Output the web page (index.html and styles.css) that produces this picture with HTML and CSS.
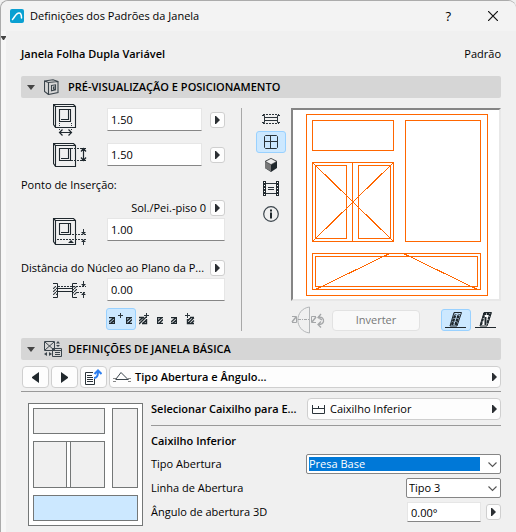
FILE: index.html
```html
<!DOCTYPE html>
<html lang="pt">
<head>
<meta charset="utf-8">
<meta name="viewport" content="width=device-width, initial-scale=1">
<title>Definições dos Padrões da Janela</title>
<link rel="stylesheet" href="styles.css">
</head>
<body>
<svg class="defs" aria-hidden="true">
  <defs>
    <pattern id="hatch" width="3" height="3" patternUnits="userSpaceOnUse"><path d="M0 3L3 0" stroke="#2b343a" stroke-width="1.1"/></pattern>
    <symbol id="play" viewBox="0 0 5 8"><path d="M0 0h1l4 4-4 4H0z" fill="#2b2f33"/></symbol>
    <symbol id="chevron" viewBox="0 0 9 6"><path d="M.5.5l4 4 4-4" fill="none" stroke="#555" stroke-width="1.1"/></symbol>
    <symbol id="frame" viewBox="0 0 24 25"><path d="M20.500.5H.5v20l2 3h20v-21zM.5.5l2 2v21M2.500 2.500h20M6.500 5.500h11v12h-11zM8 15.500h7.500V6" fill="none" stroke="#1f282e" stroke-width="1.1"/></symbol>
    <symbol id="wall-a" viewBox="0 0 6 7"><path d="M0 .5h5.500v6H0M0 5l4.500-4M1.500 6.500L6 2.500" fill="none" stroke="#1f282e" stroke-width="1.4"/></symbol>
    <symbol id="wall-b" viewBox="0 0 6 7"><path d="M6 .5H.5v6H6M.5 4.500L4.500 1M2 6.500l4-4" fill="none" stroke="#1f282e" stroke-width="1.4"/></symbol>
  </defs>
</svg>
<main class="dialog">
  <header class="titlebar">
    <svg class="logo" width="14" height="14" viewBox="0 0 14 14"><rect width="14" height="14" rx="2" fill="#0aa0d2"/><path d="M2.500 10.500C4.500 8.500 6 4 9 4c2 0 2.500 2 2.500 5" fill="none" stroke="#fff" stroke-width="1.500" stroke-linecap="round"/></svg>
    <h1 class="title">Definições dos Padrões da Janela</h1>
    <button class="plain help" type="button" aria-label="Ajuda">?</button>
    <button class="plain close" type="button" aria-label="Fechar"><svg width="10" height="10" viewBox="0 0 10 10"><path d="M0 0l10 10M10 0L0 10" stroke="#111" stroke-width="1.200"/></svg></button>
  </header>
  <div class="body">
    <svg class="edge-arrow" width="5" height="4" viewBox="0 0 5 4"><path d="M0 0h5v1L3 4H2L0 1z" fill="#444"/></svg>
    <div class="content">
      <div class="heading"><strong>Janela Folha Dupla Variável</strong><span>Padrão</span></div>

      <h2 class="section-bar">
        <svg class="fold" width="8" height="5" viewBox="0 0 8 5"><path d="M0 0h8L4 5z" fill="#444"/></svg>
        <svg width="18" height="16" viewBox="0 0 18 16"><path d="M4.500 3.500L14 2.500v11l-9.500 2zM4.500 3.500L.5 2v10.500l4 3M.5 2L9 .7l5 1.800M7.500 6.500l4-.7v5l-4 1zM9.500 8h2v2h-2z" fill="none" stroke="#3b454c" stroke-width="1.100"/></svg>
        <span>PRÉ-VISUALIZAÇÃO E POSICIONAMENTO</span>
      </h2>

      <section class="placement">
        <div class="params">
          <div class="field-row gap-large">
            <svg class="field-icon" width="36" height="31" viewBox="0 0 36 31"><use href="#frame" width="24" height="25"/><path d="M6.500 19v8M18.500 19v8" stroke="#2b343a" stroke-dasharray="1 1"/><path d="M6 28.500h13M9.500 25.500l-3 3 3 3M15.500 25.500l3 3-3 3" fill="none" stroke="#1f282e" stroke-width="1.2"/></svg>
            <input class="box" aria-label="Largura" value="1.50"><button class="step" type="button" aria-label="Opções de largura"><svg width="5" height="8"><use href="#play"/></svg></button>
          </div>
          <div class="field-row">
            <svg class="field-icon" width="36" height="31" viewBox="0 0 36 31"><use href="#frame" y="4" width="24" height="25"/><path d="M18 9.500h10M18 21.500h10" stroke="#2b343a" stroke-dasharray="2 1"/><path d="M30.500 9v13M28 12.500l2.500-3 2.500 3M28 18.500l2.500 3 2.500-3M28 9.500h5M28 21.500h5" fill="none" stroke="#1f282e" stroke-width="1.2"/></svg>
            <input class="box" aria-label="Altura" value="1.50"><button class="step" type="button" aria-label="Opções de altura"><svg width="5" height="8"><use href="#play"/></svg></button>
          </div>
          <div class="label-row">Ponto de Inserção:</div>
          <div class="label-row end"><span>Sol./Pei.-piso 0</span><button class="step" type="button" aria-label="Referência"><svg width="5" height="8"><use href="#play"/></svg></button></div>
          <div class="field-row">
            <svg class="field-icon" width="36" height="31" viewBox="0 0 36 31"><path d="M20.500 4.500H.5v23l2 3h20v-24zM.5 4.500l2 2v24M2.500 6.500h20M6.500 9.500h11v11h-11zM8 18.500h7.500V10" fill="none" stroke="#1f282e" stroke-width="1.1"/><path d="M4 25.500h29M19 20.500h14" stroke="#2b343a" stroke-dasharray="2 1"/><path d="M15 29l3-3 3 3zM28 18l2.500 2.500L33 18zM28 28l2.500-2.500L33 28z" fill="#1f282e"/><path d="M30.500 15v4M30.500 27v4" stroke="#2b343a"/></svg>
            <input class="box" aria-label="Altura do ponto de inserção" value="1.00">
          </div>
          <div class="label-row distance"><label for="distance">Distância do Núcleo ao Plano da P...</label><button class="step" type="button" aria-label="Opções de distância"><svg width="5" height="8"><use href="#play"/></svg></button></div>
          <div class="field-row">
            <svg class="field-icon" width="36" height="31" viewBox="0 0 36 31"><path d="M0 12h5v9H0zM19 12h5v9h-5z" fill="url(#hatch)"/><path d="M0 9.500h4.500v14H0M24 9.500h-4.500v14H24M5 14.500h14M5 17.500h14" fill="none" stroke="#1f282e"/><path d="M5 12.500h28M24 18.500h9" stroke="#2b343a" stroke-dasharray="2 1"/><path d="M28 10l2.500 2.500L33 10zM28 21l2.500-2.500L33 21z" fill="#1f282e"/><path d="M30.500 7v4M30.500 20v4" stroke="#2b343a"/></svg>
            <input class="box" id="distance" value="0.00">
          </div>
          <div class="anchors">
            <button class="tool active" type="button" aria-label="Âncora central"><svg width="24" height="14" viewBox="0 0 24 14"><use href="#wall-a" y="5" width="6" height="7"/><use href="#wall-b" x="17" y="5" width="6" height="7"/><path d="M9 3.500h5M11.500 1v5" stroke="#2b343a"/></svg></button>
            <button class="plain" type="button" aria-label="Âncora 1"><svg width="10" height="14" viewBox="0 0 10 14"><path d="M0 5.500h5M7.500 7v4.500H3M0 9l4-3.500M0 12l7-7M3.500 11.500L7.500 8" fill="none" stroke="#1f282e" stroke-width="1.400"/><path d="M5 3.500h5M7.500 1v5" stroke="#2b343a"/></svg></button>
            <button class="plain" type="button" aria-label="Âncora 2"><svg width="6" height="14" viewBox="0 0 6 14"><use href="#wall-b" y="5" width="6" height="7"/></svg></button>
            <button class="plain" type="button" aria-label="Âncora 3"><svg width="6" height="14" viewBox="0 0 6 14"><use href="#wall-a" y="5" width="6" height="7"/></svg></button>
            <button class="plain" type="button" aria-label="Âncora 4"><svg width="10" height="14" viewBox="0 0 10 14"><path d="M5 5.500h4M2.500 7v4.500H9M2.500 9L6 5.500M3 11.500l6-6M6 11.500L9 8.500" fill="none" stroke="#1f282e" stroke-width="1.400"/><path d="M0 3.500h5M2.500 1v5" stroke="#2b343a"/></svg></button>
          </div>
        </div>

        <div class="view-tools">
          <button class="tool" type="button" aria-label="Planta"><svg width="18" height="10" viewBox="0 0 18 10"><path d="M0 1.500h2.500v7H0M18 1.500h-2.500v7H18M3 3.500h12M3 6.500h12" fill="none" stroke="#2b343a"/><path d="M1 .5h16M1 9.500h16" stroke="#2b343a" stroke-dasharray="2 1"/></svg></button>
          <button class="tool active" type="button" aria-label="Alçado"><svg width="14" height="14" viewBox="0 0 14 14"><path d="M1.500.5h11l1 1v11l-1 1h-11l-1-1v-11zM6.500 1v12M1 6.500h12" fill="none" stroke="#2b343a"/></svg></button>
          <button class="tool" type="button" aria-label="3D"><svg width="14" height="14" viewBox="0 0 14 14"><path d="M7 0l6 3v7l-6 4-6-4V3z" fill="#20282d"/><path d="M1 3.500L7 7v6.500L1 10z" fill="#777"/><path d="M7 .5l5.500 3L7 6.500l-5.500-3z" fill="#eee" stroke="#555" stroke-width=".5"/></svg></button>
          <button class="tool" type="button" aria-label="Filme"><svg width="16" height="15" viewBox="0 0 16 15"><path d="M1.500 0v15M14.500 0v15" stroke="#20282d" stroke-width="3"/><path d="M1.500 1v14M14.500 1v14" stroke="#fff" stroke-dasharray="1 2"/><path d="M3 2.500h10M3 12.500h10M5 6.500h6M5 8.500h6" stroke="#2b343a"/></svg></button>
          <button class="tool info" type="button" aria-label="Informação"><svg width="16" height="16" viewBox="0 0 16 16"><circle cx="8" cy="8" r="7.300" fill="none" stroke="#3b454c" stroke-width="1.200"/><path d="M7 6.500h2v6H7zM7 3.500h2v2H7z" fill="#20282d"/></svg></button>
        </div>

        <div class="preview-area">
          <div class="preview">
            <svg viewBox="293 110 206 189" role="img" aria-label="Alçado da janela" fill="none" stroke="#ff6600" shape-rendering="crispEdges"><path d="M306.500 114.500h181v181h-181zM312.500 120.500h81v30h-81zM405.500 120.500h75v121h-75zM312.500 162.500h81v79h-81zM315.500 165.500h31v73h-31zM358.500 165.500h32v73h-32zM352.500 162.500v79M312.500 162.500l81 79M393.500 162.500l-81 79M312.500 253.500h168v36h-168zM315.500 256.500h162v30h-162zM315.500 289.500l74-36M403.500 253.500l74 36"/></svg>
          </div>
          <div class="preview-actions">
            <svg width="34" height="28" viewBox="0 0 34 28"><path d="M1 10.500h4.500v6H1M25 10.500h-4.500v6H25" fill="none" stroke="#a5a7a9"/><path d="M1 16l4-5M21 16l4-5" stroke="#a5a7a9" stroke-width="1.500"/><path d="M18.500 27V1C3 3 3 25 18.500 27z" fill="none" stroke="#b4b7b9"/><path d="M7 13.500h12" stroke="#a5a7a9" stroke-dasharray="3 1 1 1"/><path d="M27 11.500c4-1 6 1 5.500 4-.5 2-2 3-5 3M30 8l-3 3.500 4 2.500M30 15.500l-3 3 3 3" fill="none" stroke="#a5a7a9" stroke-width="1.300"/></svg>
            <button class="invert" type="button" disabled>Inverter</button>
            <button class="tool active" type="button" aria-label="Lado interior"><svg width="22" height="16" viewBox="0 0 22 16"><path d="M0 15.500h21" stroke="#20282d"/><path d="M5 14L9 .5h7.500L12 14z" fill="#cce8ff" stroke="#20282d"/><path d="M7 13l3.500-11M10.500 13L14 2" stroke="#20282d" stroke-width="2.500" stroke-dasharray="3 .6"/></svg></button>
            <button class="tool last" type="button" aria-label="Lado exterior"><svg width="22" height="16" viewBox="0 0 22 16"><path d="M0 15.500h21" stroke="#20282d"/><path d="M5 14L9 .5h7.500L12 14z" fill="#fff" stroke="#20282d"/><path d="M6 13l3.500-11M8 2h8M12.500 11L15 2" stroke="#20282d" stroke-width="2" stroke-dasharray="3 .6"/><path d="M10.500 13V5" stroke="#20282d" stroke-width="2"/></svg></button>
          </div>
        </div>
      </section>

      <h2 class="section-bar">
        <svg class="fold" width="8" height="5" viewBox="0 0 8 5"><path d="M0 0h8L4 5z" fill="#444"/></svg>
        <svg class="wide-icon" width="18" height="16" viewBox="0 0 18 16"><path d="M.5.5h10v9H.5zM1 1l9 8M10 1L1 9M8.500 7.500h9v8h-9z" fill="#d6d6d6" stroke="#3b454c"/><path d="M9 9.500h8M11 11.500h5M11 13.500h5" stroke="#3b454c"/><path d="M12 2.500l2-2.500 2 2.500zM12 4h4l-2 2zM3 11v4l-3-2zM5 11v4l3-2z" fill="#3b454c"/></svg>
        <span>DEFINIÇÕES DE JANELA BÁSICA</span>
      </h2>

      <nav class="pager">
        <button class="btn" type="button" aria-label="Anterior"><svg width="7" height="11" viewBox="0 0 7 11"><path d="M7 0v11L0 6V5z" fill="#20282d"/></svg></button>
        <button class="btn" type="button" aria-label="Seguinte"><svg width="7" height="11" viewBox="0 0 7 11"><path d="M0 0v11l7-5V5z" fill="#20282d"/></svg></button>
        <button class="btn" type="button" aria-label="Ir para a página"><svg width="17" height="16" viewBox="0 0 17 16"><path d="M8 3.500H.5v12h9V10M2 6.500h5M2 8.500h6M2 10.500h6M2 12.500h6" fill="none" stroke="#2b343a"/><path d="M9 9c3 0 4-2 4-6M9.500 5L13 1.500 16.500 5" fill="none" stroke="#2d7ff0" stroke-width="2"/></svg></button>
        <button class="btn page" type="button"><svg width="18" height="10" viewBox="0 0 18 10"><path d="M0 6.500h3M15 6.500h3M0 9.500h3M15 9.500h3" stroke="#888"/><path d="M2.500 7.500h13M3 7l5-6.500 7 7" fill="none" stroke="#3b454c"/></svg><strong>Tipo Abertura e Ângulo...</strong><svg class="push" width="5" height="8"><use href="#play"/></svg></button>
      </nav>

      <section class="basic">
        <svg class="sash-map" width="115" height="124" viewBox="28 403 115 124" role="img" aria-label="Caixilhos" stroke="#747777" shape-rendering="crispEdges"><path d="M28.500 403.500h114v122h-114z" fill="#fff"/><path d="M33.500 408.500h71v25h-71zM112.500 408.500h25v79h-25zM33.500 441.500h71v46h-71z" fill="#f0f0f0"/><path d="M66.500 441.500h4v46h-4z" fill="#fff"/><path d="M33.500 495.500h104v25h-104z" fill="#cce8ff"/></svg>
        <div class="sash">
          <div class="sash-pick"><strong>Selecionar Caixilho para E...</strong><button class="btn picker" type="button"><svg width="13" height="9" viewBox="0 0 13 9"><path d="M.5 0v8.500h12V0M.5 3.500h12M6.500 1v3" fill="none" stroke="#2b343a"/></svg><span>Caixilho Inferior</span><svg class="push" width="5" height="8"><use href="#play"/></svg></button></div>
          <h3 class="sash-title">Caixilho Inferior</h3>
          <div class="option"><label for="opening">Tipo Abertura</label><span class="select wide"><select id="opening" class="focused"><option>Presa Base</option></select><svg width="9" height="6"><use href="#chevron"/></svg></span></div>
          <div class="option"><label for="line">Linha de Abertura</label><span class="select"><select id="line"><option>Tipo 3</option></select><svg width="9" height="6"><use href="#chevron"/></svg></span></div>
          <div class="option"><label for="angle">Ângulo de abertura 3D</label><input class="box small" id="angle" value="0.00°"><button class="step" type="button" aria-label="Opções do ângulo"><svg width="5" height="8"><use href="#play"/></svg></button></div>
        </div>
      </section>
    </div>
  </div>
</main>
</body>
</html>
```
FILE: styles.css
```css
* { box-sizing: border-box; }
body {
  margin: 0;
  background: #f0f0f0;
  color: #000;
  font: 11px/16px "Open Sans", "Noto Sans", sans-serif;
}
button, input, select { font: inherit; color: inherit; margin: 0; }
h1, h2, h3 { margin: 0; font-size: 11px; }
h2, h3, strong { font-weight: 600; }
svg { flex: none; display: block; }
.defs { position: absolute; width: 0; height: 0; }
.dialog {
  min-height: 100vh;
  border: solid #ababab;
  border-width: 1px 0 0 1px;
  border-radius: 8px 8px 0 0;
}
.titlebar {
  display: flex;
  align-items: center;
  height: 30px;
  padding: 0 18px 0 9px;
  background: #f3f3f3;
  border-radius: 8px 8px 0 0;
}
.title { flex: 1; margin-left: 6px; font-weight: 400; }
.plain {
  display: flex;
  align-items: center;
  padding: 0;
  border: 0;
  background: none;
}
.help { margin-right: 37px; font-size: 13px; }
.body { position: relative; padding-left: 5px; background: #f7f7f7; }
.edge-arrow { position: absolute; left: 0; top: 5px; }
.content { padding: 0 15px; background: #f0f0f0; }
.heading {
  display: flex;
  justify-content: space-between;
  align-items: center;
  height: 45px;
}
.section-bar {
  display: flex;
  align-items: center;
  gap: 6px;
  height: 22px;
  padding-left: 6px;
  border-radius: 2px;
  background: #d6d6d6;
}
.fold { margin-right: 3px; }
.placement { display: flex; padding: 10px 0 7px; }
.params { width: 221px; padding-right: 16px; border-right: 1px solid #a8a8a8; }
.field-row { display: flex; align-items: center; gap: 8px; height: 23px; }
.gap-large { margin-bottom: 12px; }
.field-icon { margin: 0 10px 0 32px; overflow: visible; }
.field-row .box { flex: 1; }
.box {
  width: 60px;
  min-width: 0;
  height: 23px;
  padding: 0 3px;
  border: 1px solid #e6e6e6;
  border-bottom-color: #868686;
  background: #fff;
  outline: 0;
}
.step {
  display: flex;
  align-items: center;
  justify-content: center;
  flex: none;
  width: 15px;
  height: 16px;
  padding: 0;
  border: 1px solid #cfcfcf;
  border-radius: 3px;
  background: #fdfdfd;
}
.label-row {
  display: flex;
  align-items: center;
  justify-content: space-between;
  height: 22px;
  white-space: nowrap;
}
.field-row + .label-row { margin-top: 8px; }
.label-row.end { justify-content: flex-end; gap: 4px; padding-top: 2px; }
.field-row + .label-row.distance { margin-top: 15px; padding-top: 2px; }
.anchors { display: flex; align-items: center; gap: 8px; margin: 7px 0 0 85px; }
.tool {
  display: flex;
  align-items: center;
  justify-content: center;
  width: 30px;
  height: 22px;
  padding: 0;
  border: 1px solid transparent;
  border-radius: 3px;
  background: none;
}
.tool.active { border-color: #99d1ff; background: #cce8ff; }
.anchors .tool { margin-right: -5px; }
.view-tools { display: flex; flex-direction: column; gap: 1px; margin-left: 14px; }
.view-tools .info { margin-top: 3px; }
.preview-area { flex: 1; margin-left: 5px; }
.preview {
  border: 2px solid #fff;
  border-top-color: #858585;
  border-left-color: #858585;
  border-bottom-color: #e8e8e8;
  border-right-color: #e8e8e8;
  background: #fff;
}
.preview svg { width: 100%; height: auto; }
.preview-actions { display: flex; align-items: center; height: 22px; margin-top: 8px; }
.invert {
  width: 88px;
  height: 21px;
  margin: 0 auto 0 7px;
  padding: 0;
  border: 1px solid #e2e2e2;
  border-radius: 4px;
  background: #f9f9f9;
  color: #777;
  font-size: 11px;
}
.pager {
  display: flex;
  gap: 2px;
  padding: 6px 0 3px 1px;
  border-bottom: 1px solid #999;
}
.btn {
  display: flex;
  align-items: center;
  justify-content: center;
  width: 27px;
  height: 22px;
  padding: 0;
  border: 1px solid #cfcfcf;
  border-radius: 4px;
  background: #fdfdfd;
}
.push { margin-left: auto; }
.btn.page { flex: 1; gap: 4px; padding: 0 3px; }
.basic { display: flex; gap: 8px; padding: 6px 0 5px 7px; }
.sash-map { margin-top: 5px; }
.sash { flex: 1; min-width: 0; }
.sash-pick {
  display: flex;
  align-items: center;
  justify-content: space-between;
  padding-bottom: 5px;
  border-bottom: 1px solid #999;
  white-space: nowrap;
}
.btn.picker { flex: none; width: 194px; gap: 5px; padding: 0 3px 0 4px; }
.sash-title { height: 26px; line-height: 30px; }
.option { display: flex; align-items: center; gap: 5px; height: 24px; }
.option label { flex: 1; }
.option .box { width: 74px; height: 20px; }
.select { position: relative; width: 95px; }
.select.wide { width: 195px; }
.select svg { position: absolute; right: 4px; top: 8px; pointer-events: none; }
select {
  display: block;
  width: 100%;
  height: 20px;
  padding: 0 20px 0 2px;
  border: 1px solid #858585;
  border-radius: 2px;
  background: #fff;
  appearance: none;
  outline: 0;
}
select.focused {
  color: #fff;
  background: linear-gradient(#0078d7, #0078d7) 2px 2px / calc(100% - 22px) 14px no-repeat #fff;
}
```
